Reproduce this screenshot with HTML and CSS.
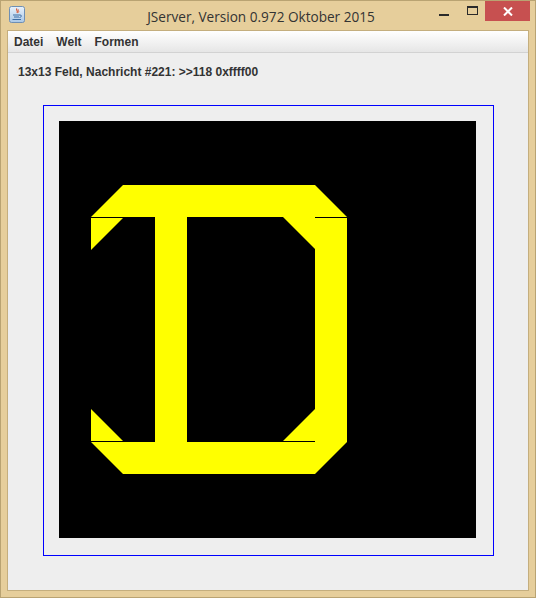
FILE: index.html
```html
<!DOCTYPE html>
<html>
<head>
<meta charset="utf-8">
<link rel="stylesheet" href="styles.css">
</head>
<body>
<div class="window">
  <div class="titlebar">
    <svg class="app-icon" width="16" height="17" viewBox="0 0 16 17">
      <defs>
        <linearGradient id="ig" x1="0" y1="0" x2="0" y2="1">
          <stop offset="0" stop-color="#e9f2fb"/>
          <stop offset="1" stop-color="#a9c7e6"/>
        </linearGradient>
      </defs>
      <rect x="0.5" y="0.5" width="15" height="16" rx="2" fill="url(#ig)" stroke="#6f8fb3"/>
      <path d="M8 2.5 C6.5 4 9.5 5 8 7" stroke="#d9522b" stroke-width="1.2" fill="none"/>
      <path d="M9.5 3.5 C8.7 4.5 10.3 5.2 9.5 6.5" stroke="#d9522b" stroke-width="0.9" fill="none"/>
      <path d="M4 9 H11 M5 11 H10 M3.5 13.5 H12" stroke="#3d6ea6" stroke-width="1.2" fill="none"/>
      <path d="M11 9 C13 9 13 11 10.5 11.5" stroke="#3d6ea6" stroke-width="1" fill="none"/>
    </svg>
    <div class="title">JServer, Version 0.972 Oktober 2015</div>
    <div class="controls">
      <div class="btn btn-min"><span class="min-bar"></span></div>
      <div class="btn btn-max"><span class="max-box"></span></div>
      <div class="btn btn-close">
        <svg width="10" height="9" viewBox="0 0 10 9"><path d="M1 0.5 L9 8.5 M9 0.5 L1 8.5" stroke="#fff" stroke-width="2"/></svg>
      </div>
    </div>
  </div>
  <div class="client">
    <div class="menubar">
      <span class="menu">Datei</span>
      <span class="menu">Welt</span>
      <span class="menu">Formen</span>
    </div>
    <div class="panel">
      <div class="status">13x13 Feld, Nachricht #221: &gt;&gt;118 0xffff00</div>
      <div class="board-frame">
        <svg class="board" width="417" height="417" viewBox="0 0 417 417">
          <rect x="0" y="0" width="417" height="417" fill="#000"/>
          <g fill="#ffff00">
            <polygon points="32,96 64,64 256,64 288,96"/>
            <polygon points="32,97 64,97 32,129"/>
            <polygon points="224,96 256,96 256,128"/>
            <rect x="96" y="96" width="32" height="225"/>
            <rect x="256" y="97" width="32" height="224"/>
            <polygon points="32,288 32,320 64,320"/>
            <polygon points="256,288 256,320 224,320"/>
            <polygon points="32,321 288,321 256,353 64,353"/>
          </g>
          <g fill="#000">
            <rect x="32" y="96" width="32" height="1"/>
            <rect x="256" y="96" width="32" height="1"/>
            <rect x="32" y="320" width="32" height="1"/>
            <rect x="224" y="320" width="32" height="1"/>
          </g>
        </svg>
      </div>
    </div>
  </div>
</div>
</body>
</html>
```
FILE: styles.css
```css
* { box-sizing: border-box; }
html, body {
  margin: 0;
  padding: 0;
  width: 536px;
  height: 598px;
  overflow: hidden;
}
body {
  font-family: "Liberation Sans", Arial, sans-serif;
}
.window {
  width: 536px;
  height: 598px;
  background: #e6ce9b;
  border: 1px solid #b9a372;
  display: flex;
  flex-direction: column;
}
.titlebar {
  height: 29px;
  display: flex;
  align-items: flex-start;
  position: relative;
}
.app-icon {
  margin: 5px 0 0 8px;
}
.title {
  position: absolute;
  left: 0;
  right: 14px;
  top: 6px;
  text-align: center;
  font-family: "Open Sans", "Noto Sans", sans-serif;
  font-size: 13.6px;
  color: #333;
  pointer-events: none;
}
.controls {
  margin-left: auto;
  display: flex;
  align-items: flex-start;
  margin-right: 5px;
}
.btn {
  height: 20px;
  display: flex;
  align-items: center;
  justify-content: center;
}
.btn-min { width: 26px; }
.min-bar {
  display: block;
  width: 10px;
  height: 2px;
  background: #2a2a2a;
  margin-top: 8px;
  margin-left: -4px;
}
.btn-max { width: 26px; }
.max-box {
  display: block;
  width: 11px;
  height: 9px;
  border: 1px solid #2a2a2a;
  border-top-width: 2px;
  margin-top: -1px;
}
.btn-close {
  width: 45px;
  background: #c75050;
}
.client {
  flex: 1;
  margin: 0 6px 6px 6px;
  border: 1px solid #c4ae7e;
  background: #eeeeee;
  display: flex;
  flex-direction: column;
}
.menubar {
  height: 22px;
  background: linear-gradient(#ffffff, #e6e6e6);
  border-bottom: 1px solid #d2d2d2;
  display: flex;
  align-items: center;
  padding-left: 6px;
}
.menu {
  font-size: 12px;
  font-weight: bold;
  color: #333;
  padding: 0 7px 0 0;
  margin-right: 6px;
  margin-top: 1px;
}
.panel {
  flex: 1;
  padding: 12px 0 0 10px;
  display: flex;
  flex-direction: column;
}
.status {
  font-size: 12px;
  font-weight: bold;
  color: #333;
  line-height: 14px;
}
.board-frame {
  margin: 26px 0 0 25px;
  width: 451px;
  height: 451px;
  border: 1px solid #0000ff;
  padding: 15px 17px 17px 15px;
}
.board {
  display: block;
}
```
